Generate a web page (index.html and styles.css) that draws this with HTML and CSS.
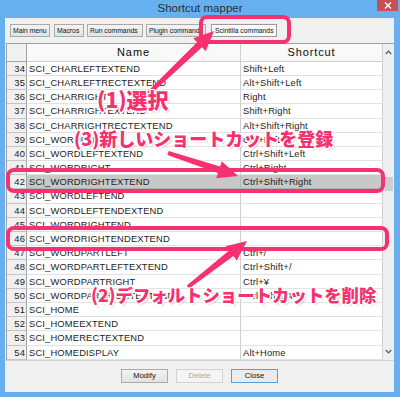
FILE: index.html
```html
<!DOCTYPE html>
<html lang="ja">
<head>
<meta charset="utf-8">
<title>Shortcut mapper</title>
<link rel="stylesheet" href="styles.css">
</head>
<body>
<div class="window">
  <div class="titlebar">
    <span class="tb-spacer"></span>
    <span class="title">Shortcut mapper</span>
    <span class="close"><svg width="8" height="7" viewBox="0 0 8 7"><path d="M1 .5 7 6.5M7 .5 1 6.5" stroke="#fff" stroke-width="1.4" fill="none"/></svg></span>
  </div>
  <div class="client">
    <div class="tabs">
      <div class="tab t-main">Main menu</div>
      <div class="tab t-macros">Macros</div>
      <div class="tab t-run">Run commands</div>
      <div class="tab t-plugin">Plugin commands</div>
      <div class="tab t-sci active">Scintilla commands</div>
    </div>
    <div class="grid">
      <div class="table">
        <div class="row head"><div class="num"></div><div class="name">Name</div><div class="sc">Shortcut</div></div>
        <div class="row"><div class="num">34</div><div class="name">SCI_CHARLEFTEXTEND</div><div class="sc">Shift+Left</div></div>
        <div class="row"><div class="num">35</div><div class="name">SCI_CHARLEFTRECTEXTEND</div><div class="sc">Alt+Shift+Left</div></div>
        <div class="row"><div class="num">36</div><div class="name">SCI_CHARRIGHT</div><div class="sc">Right</div></div>
        <div class="row"><div class="num">37</div><div class="name">SCI_CHARRIGHTEXTEND</div><div class="sc">Shift+Right</div></div>
        <div class="row"><div class="num">38</div><div class="name">SCI_CHARRIGHTRECTEXTEND</div><div class="sc">Alt+Shift+Right</div></div>
        <div class="row"><div class="num">39</div><div class="name">SCI_WORDLEFT</div><div class="sc">Ctrl+Left</div></div>
        <div class="row"><div class="num">40</div><div class="name">SCI_WORDLEFTEXTEND</div><div class="sc">Ctrl+Shift+Left</div></div>
        <div class="row"><div class="num">41</div><div class="name">SCI_WORDRIGHT</div><div class="sc">Ctrl+Right</div></div>
        <div class="row sel"><div class="num">42</div><div class="name">SCI_WORDRIGHTEXTEND</div><div class="sc">Ctrl+Shift+Right</div></div>
        <div class="row"><div class="num">43</div><div class="name">SCI_WORDLEFTEND</div><div class="sc"></div></div>
        <div class="row"><div class="num">44</div><div class="name">SCI_WORDLEFTENDEXTEND</div><div class="sc"></div></div>
        <div class="row"><div class="num">45</div><div class="name">SCI_WORDRIGHTEND</div><div class="sc"></div></div>
        <div class="row"><div class="num">46</div><div class="name">SCI_WORDRIGHTENDEXTEND</div><div class="sc"></div></div>
        <div class="row"><div class="num">47</div><div class="name">SCI_WORDPARTLEFT</div><div class="sc">Ctrl+/</div></div>
        <div class="row"><div class="num">48</div><div class="name">SCI_WORDPARTLEFTEXTEND</div><div class="sc">Ctrl+Shift+/</div></div>
        <div class="row"><div class="num">49</div><div class="name">SCI_WORDPARTRIGHT</div><div class="sc">Ctrl+¥</div></div>
        <div class="row"><div class="num">50</div><div class="name">SCI_WORDPARTRIGHTEXTEND</div><div class="sc">Ctrl+Shift+¥</div></div>
        <div class="row"><div class="num">51</div><div class="name">SCI_HOME</div><div class="sc"></div></div>
        <div class="row"><div class="num">52</div><div class="name">SCI_HOMEEXTEND</div><div class="sc"></div></div>
        <div class="row"><div class="num">53</div><div class="name">SCI_HOMERECTEXTEND</div><div class="sc"></div></div>
        <div class="row"><div class="num">54</div><div class="name">SCI_HOMEDISPLAY</div><div class="sc">Alt+Home</div></div>
      </div>
      <div class="scroll">
        <div class="sarrow"><svg width="7" height="5" viewBox="0 0 7 5"><path d="M.8 4 3.5 1.2 6.2 4" stroke="#555" stroke-width="1.2" fill="none"/></svg></div>
        <div class="sgap"></div>
        <div class="thumb"></div>
        <div class="sfill"></div>
        <div class="sarrow"><svg width="7" height="5" viewBox="0 0 7 5"><path d="M.8 1 3.5 3.8 6.2 1" stroke="#555" stroke-width="1.2" fill="none"/></svg></div>
      </div>
    </div>
    <div class="buttons">
      <div class="btn">Modify</div>
      <div class="btn disabled">Delete</div>
      <div class="btn default">Close</div>
    </div>
  </div>

  <svg class="overlay" width="400" height="397" viewBox="0 0 400 397">
    <g fill="none" stroke="#f5326f" stroke-width="4">
      <rect x="201" y="17" width="88" height="25" rx="6"/>
      <rect x="8" y="170" width="375" height="21" rx="6"/>
      <rect x="8" y="228" width="379" height="21" rx="6"/>
    </g>
    <g fill="#f5326f">
      <polygon points="149.4,95.5 202,47.3 205.7,51.3 214,31 193.3,38.3 197.1,42.3 146.6,92.6"/>
      <polygon points="167.4,154.9 217.9,173.1 216.2,178.3 238,176 221.8,161.2 220.1,166.4 168.6,151.1"/>
      <polygon points="189.2,288.6 233.4,256.1 236.8,260.4 247,241 225.7,246.2 229.1,250.5 186.8,285.4"/>
    </g>
  </svg>
  <div class="note n1">(1)選択</div>
  <div class="note n3">(3)新しいショートカットを登録</div>
  <div class="note n2">(2)デフォルトショートカットを削除</div>
</div>
</body>
</html>
```
FILE: styles.css
```css
* { box-sizing: border-box; margin: 0; padding: 0; }
html, body { width: 400px; height: 397px; overflow: hidden; }
body { font-family: "Liberation Sans", Arial, sans-serif; background: #66b0f0; }

.window {
  position: relative;
  width: 400px;
  height: 397px;
  background: #66b0f0;
  display: flex;
  flex-direction: column;
}

.titlebar {
  height: 18px;
  display: grid;
  grid-template-columns: 1fr auto 1fr;
  align-items: start;
}
.title { font-size: 11.5px; line-height: 16px; color: #2e2e2e; }
.close {
  justify-self: end;
  margin-right: 2px;
  width: 21px;
  height: 11px;
  background: #c75050;
  display: flex;
  align-items: center;
  justify-content: center;
}

.client {
  margin: 0 6px 0 5px;
  height: 374px;
  background: #f0f0f0;
  display: flex;
  flex-direction: column;
}

.tabs {
  display: flex;
  padding: 6px 0 0 5px;
  gap: 3px;
  height: 19px;
}
.tab {
  height: 13px;
  font-size: 6.8px;
  line-height: 11px;
  color: #111;
  padding: 0 2px;
  white-space: nowrap;
  overflow: hidden;
  background: linear-gradient(#f4f4f4, #e3e3e3);
  border: 1px solid #a9a9a9;
}
.t-main { width: 40px; }
.t-macros { width: 30px; margin-left: 1px; }
.t-run { width: 56px; }
.t-plugin { width: 60px; }
.t-sci { width: 66px; margin-left: 2px; }
.tab.active {
  background: #f8f8f8;
  border-color: #9a9a9a;
  box-shadow: inset 1px 1px 0 #fff;
  padding-left: 3px;
}

.grid {
  margin: 6px 0 0 1px;
  width: 388px;
  display: flex;
  border-top: 1px solid #a0a0a0;
  border-left: 1px solid #a0a0a0;
  border-bottom: 1px solid #d4d4d4;
  background: #fff;
}
.table { width: 376px; display: flex; flex-direction: column; }
.row { display: flex; height: 14.2px; font-size: 9.4px; line-height: 13px; color: #1c1c1c; letter-spacing: 0.15px; }
.row > div { height: 100%; white-space: nowrap; overflow: hidden; }
.num {
  width: 20px;
  text-align: right;
  padding-right: 1px;
  background: #f0f0f0;
  border-right: 1px solid #a3a3a3;
  border-bottom: 1px solid #c4c4c4;
}
.name {
  width: 214px;
  padding-left: 2px;
  border-right: 1px solid #cfcfcf;
  border-bottom: 1px solid #e2e2e2;
}
.sc {
  width: 142px;
  padding-left: 2px;
  border-right: 1px solid #cfcfcf;
  border-bottom: 1px solid #e2e2e2;
}
.row.head { height: 17.8px; font-size: 11px; line-height: 16px; letter-spacing: 0.9px; color: #0c0c0c; }
.row.head .name, .row.head .sc { text-align: center; padding-left: 0; background: #f9f9f9; border-bottom-color: #cfcfcf; }
.row.head .num { border-bottom-color: #a3a3a3; }
.row.sel .name, .row.sel .sc { background: #c8c8c8; border-bottom-color: #b0b0b0; }
.row.sel .name { border-right-color: #b8b8b8; }

.scroll {
  width: 11px;
  background: #efefef;
  display: flex;
  flex-direction: column;
  align-items: center;
}
.sarrow { height: 16px; display: flex; align-items: center; justify-content: center; width: 100%; }
.sgap { height: 117px; }
.thumb { width: 8px; height: 14px; background: #cdcdcd; }
.sfill { flex: 1; }

.buttons {
  margin-top: 8px;
  display: flex;
  justify-content: center;
  gap: 8.5px;
}
.btn {
  width: 46.5px;
  height: 14px;
  font-size: 7.6px;
  line-height: 12px;
  text-align: center;
  color: #111;
  background: linear-gradient(#f3f3f3, #e2e2e2);
  border: 1px solid #acacac;
}
.btn.disabled { color: #a8a8a8; background: #f4f4f4; border-color: #d2d2d2; }
.btn.default { border-color: #5a9ee0; background: #ebebeb; }

.overlay { position: absolute; left: 0; top: 0; pointer-events: none; }

.note {
  position: absolute;
  font-family: "Noto Sans CJK JP", "Noto Sans CJK SC", sans-serif;
  font-weight: 900;
  line-height: 1;
  white-space: nowrap;
  color: #f5326f;
  text-shadow:
    1.5px 0 0 #fff, -1.5px 0 0 #fff, 0 1.5px 0 #fff, 0 -1.5px 0 #fff,
    1px 1px 0 #fff, -1px -1px 0 #fff, 1px -1px 0 #fff, -1px 1px 0 #fff,
    1.5px 1.5px 1.5px rgba(120, 0, 40, 0.25);
}
.n1 { left: 97px; top: 89px; font-size: 21px; }
.n3 { left: 74px; top: 129px; font-size: 18px; }
.n2 { left: 91px; top: 286px; font-size: 17.4px; }
```
